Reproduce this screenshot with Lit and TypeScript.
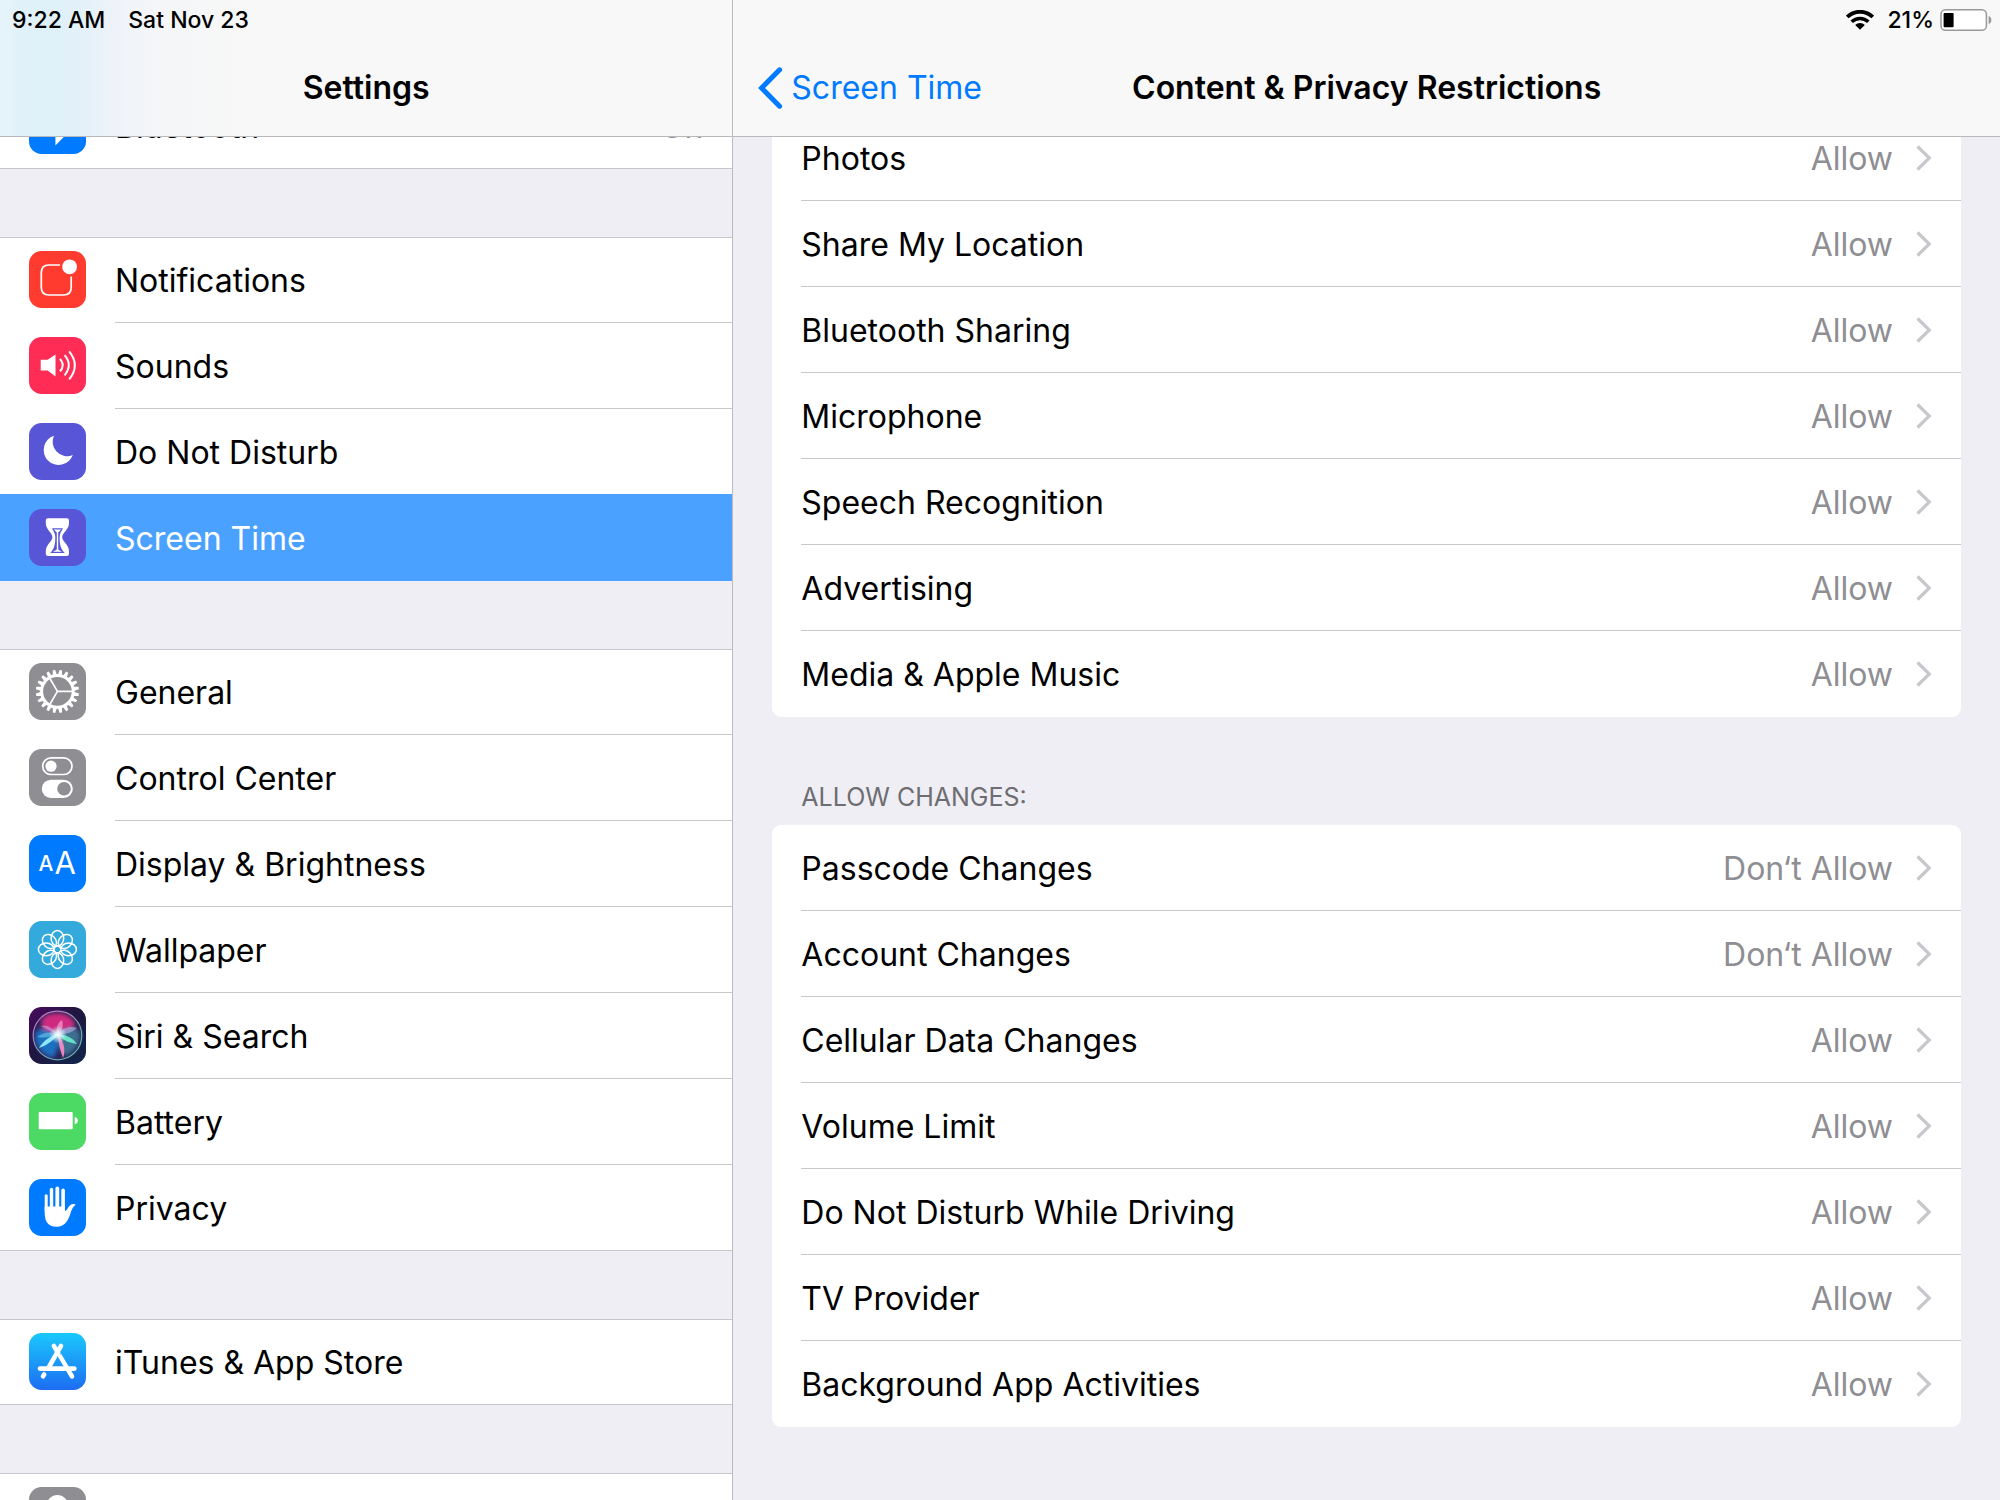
import { LitElement, html, svg, css, nothing, TemplateResult, SVGTemplateResult } from "lit";
import { customElement, property } from "lit/decorators.js";

type IconName =
  | "bluetooth" | "notifications" | "sounds" | "dnd" | "screentime" | "general"
  | "control" | "display" | "wallpaper" | "siri" | "battery" | "privacy"
  | "store" | "passwords";

interface MenuItem {
  label?: string;
  name?: string;
  icon: IconName;
  value?: string;
  selected?: boolean;
}

interface Restriction {
  label: string;
  value: string;
}

const MENU: MenuItem[][] = [
  [{ label: "Bluetooth", icon: "bluetooth", value: "On" }],
  [
    { label: "Notifications", icon: "notifications" },
    { label: "Sounds", icon: "sounds" },
    { label: "Do Not Disturb", icon: "dnd" },
    { label: "Screen Time", icon: "screentime", selected: true },
  ],
  [
    { label: "General", icon: "general" },
    { label: "Control Center", icon: "control" },
    { label: "Display & Brightness", icon: "display" },
    { label: "Wallpaper", icon: "wallpaper" },
    { label: "Siri & Search", icon: "siri" },
    { label: "Battery", icon: "battery" },
    { label: "Privacy", icon: "privacy" },
  ],
  [{ label: "iTunes & App Store", icon: "store" }],
  [{ name: "Passwords", icon: "passwords" }],
];

const PRIVACY: Restriction[] = [
  { label: "Photos", value: "Allow" },
  { label: "Share My Location", value: "Allow" },
  { label: "Bluetooth Sharing", value: "Allow" },
  { label: "Microphone", value: "Allow" },
  { label: "Speech Recognition", value: "Allow" },
  { label: "Advertising", value: "Allow" },
  { label: "Media & Apple Music", value: "Allow" },
];

const CHANGES: Restriction[] = [
  { label: "Passcode Changes", value: "Don‘t Allow" },
  { label: "Account Changes", value: "Don‘t Allow" },
  { label: "Cellular Data Changes", value: "Allow" },
  { label: "Volume Limit", value: "Allow" },
  { label: "Do Not Disturb While Driving", value: "Allow" },
  { label: "TV Provider", value: "Allow" },
  { label: "Background App Activities", value: "Allow" },
];

const steps = (n: number) => Array.from({ length: n }, (_, i) => (i * 360) / n);

const TILE: Record<IconName, string> = {
  bluetooth: "#007aff",
  notifications: "#ff3b30",
  sounds: "#ff2d55",
  dnd: "#5856d6",
  screentime: "#5856d6",
  general: "#8e8e93",
  control: "#8e8e93",
  display: "#007aff",
  wallpaper: "#34aadc",
  siri: "url(#siri-bg)",
  battery: "#4cd964",
  privacy: "#007aff",
  store: "url(#store-bg)",
  passwords: "#8e8e93",
};

const GLYPH: Record<IconName, SVGTemplateResult> = {
  bluetooth: svg`
    <path d="M18.5 19 L37 36 L27.6 45.5 V10 L37 19 L18.5 37" fill="none" stroke="#fff" stroke-width="2.4"/>
    <path d="M27 39 H34 L27 46.4 Z" fill="#fff"/>`,
  notifications: svg`
    <path d="M31 14 H20 Q12.3 14 12.3 21.5 V36.5 Q12.3 44 20 44 H34.5 Q42.2 44 42.2 36.5 V25.5" fill="none" stroke="#fff" stroke-width="1.7"/>
    <circle cx="40.6" cy="15.8" r="7.4" fill="#fff"/>`,
  sounds: svg`
    <path d="M11.7 22.7 H18.7 L26.5 17.6 V39.4 L18.7 33.4 H11.7 Z" fill="#fff"/>
    <g fill="none" stroke="#fff" stroke-width="2">
      <path d="M31 21.8 Q36.5 28 31 34.4"/>
      <path d="M35.6 18.2 Q44 28 35.6 38.4"/>
      <path d="M40.2 14.4 Q51.5 28.5 40.2 42.4"/>
    </g>`,
  dnd: svg`
    <path d="M25 12.7 A15 15 0 1 0 43.8 32 A14.4 14.4 0 0 1 25 12.7 Z" fill="#fff"/>`,
  screentime: svg`
    <path d="M19 9.3 H37.8 Q40 9.3 40 11.5 V14 C40 21 33.2 23.5 33.2 28 C33.2 32.8 40 35.2 40 42.2 V44.7 Q40 47 37.8 47 H19 Q16.8 47 16.8 44.7 V42.2 C16.8 35.2 23.4 32.8 23.4 28 C23.4 23.5 16.8 21 16.8 14 V11.5 Q16.8 9.3 19 9.3 Z" fill="#fff"/>
    <path d="M23 19.2 H34 C32.6 22.2 30.6 24 30.6 28 C30.6 35 31.5 40 35.8 44 H21.2 C25.4 40 26.3 35 26.3 28 C26.3 24 24.4 22.2 23 19.2 Z" fill="#5856d6"/>
    <path d="M24.8 20.4 H32.2 L29.2 23.5 V40.5 C30.5 41.5 32 42.2 33 42.8 H24 C25 42.2 26.5 41.5 27.8 40.5 V23.5 Z" fill="#fff"/>`,
  general: svg`
    <g fill="none" stroke="#fff">
      <circle cx="28.4" cy="28.4" r="15.8" stroke-width="3"/>
      <path d="M28.4 28.4 H43 M28.4 28.4 L21.1 15.8 M28.4 28.4 L21.1 41" stroke-width="1.7"/>
    </g>
    <g fill="#fff">
      ${steps(20).map((a) => svg`<path d="M26.3 12.2 L27.2 6.8 H29.6 L30.5 12.2 Z" transform="rotate(${a + 9} 28.4 28.4)"/>`)}
    </g>`,
  control: svg`
    <rect x="13.7" y="8.9" width="29.3" height="16.6" rx="8.3" fill="none" stroke="#fff" stroke-width="1.7"/>
    <circle cx="22" cy="17.2" r="5.6" fill="#fff"/>
    <rect x="12.8" y="30.7" width="31" height="18.3" rx="9.1" fill="#fff"/>
    <circle cx="35" cy="39.8" r="6.8" fill="#8e8e93"/>`,
  display: svg`
    <text x="9.4" y="36.3" font-family="Inter, sans-serif" font-size="21" font-weight="500" fill="#fff">A</text>
    <text x="25.6" y="39" font-family="Inter, sans-serif" font-size="31" font-weight="400" fill="#fff">A</text>`,
  wallpaper: svg`
    <g fill="none" stroke="#fff" stroke-width="1.5">
      ${steps(8).map((a) => svg`<ellipse cx="28.4" cy="17.2" rx="6.3" ry="7.8" transform="rotate(${a} 28.4 28.4)"/>`)}
      <circle cx="28.4" cy="28.4" r="3.4"/>
    </g>`,
  siri: svg`
    <circle cx="28.5" cy="28.5" r="24" fill="#2c2458"/>
    <g filter="url(#siri-soft)">
      <path d="M28 28 C14 26 9 16 15 10 C26 3 42 6 46 17 C42 24 36 26 28 28 Z" fill="#cf2b80"/>
      <path d="M28 28 C18 20 8 20 6 28 C6 38 12 48 24 51 C29 44 31 36 28 28 Z" fill="#1a6fc0"/>
      <path d="M28 28 C36 20 46 18 51 26 C52 36 46 45 36 49 C32 44 28 36 28 28 Z" fill="#3a6f90"/>
    </g>
    <path d="M28 27 C23 20 17 17 12 19 C17 22 22 24 28 27 Z" fill="#d8a0e8" opacity=".55"/>
    <path d="M28 27 C21 24 13 26 8 30 C15 31 22 31 28 27 Z" fill="#7fd6f0" opacity=".5"/>
    <path d="M30 26 C26 33 18 38 10 41 C14 34 21 29 30 26 Z" fill="#9df4ff" opacity=".9"/>
    <path d="M29 27 C38 28 44 31 48 37 C40 36 33 33 29 27 Z" fill="#6ff5cc" opacity=".85"/>
    <path d="M29 27 C35 35 37 43 34 51 C31 43 29 35 29 27 Z" fill="#ff8cc8" opacity=".9"/>
    <path d="M28 27 C27 20 29 15 33 13 C35 19 33 24 28 27 Z" fill="#ffd0ea" opacity=".5"/>
    <path d="M28 27 C35 20 42 19 48 21 C43 26 35 28 28 27 Z" fill="#b9c6ff" opacity=".5"/>
    <circle cx="29" cy="27.5" r="9" fill="url(#siri-core)"/>
    <circle cx="28.5" cy="28.5" r="24.3" fill="none" stroke="url(#siri-ring)" stroke-width="1.2"/>`,
  battery: svg`
    <rect x="9.7" y="19" width="34" height="17.2" rx="1" fill="#fff"/>
    <path d="M45.7 24 Q48.8 24.6 48.8 27.6 Q48.8 30.6 45.7 31.2 Z" fill="#fff"/>`,
  privacy: svg`
    <g stroke="#fff" stroke-linecap="round" fill="none">
      <path d="M17.2 16.8 V32" stroke-width="3"/>
      <path d="M22.5 10.4 V32" stroke-width="3.4"/>
      <path d="M28.3 9.4 V32" stroke-width="3.8"/>
      <path d="M34.1 11.4 V32" stroke-width="3.6"/>
    </g>
    <path d="M15.7 27.5 H35.9 V32.2 Q37.6 31.6 39 29 Q41 25.2 44.6 25 Q46.8 25 46.4 26 Q43.6 27.6 42.4 31.6 C41 36 39.8 40 37.4 43 Q33.8 47.7 27.8 47.7 Q21 47.7 17.8 43.2 Q15.7 40 15.7 34 Z" fill="#fff"/>`,
  store: svg`
    <g stroke="#fff" stroke-width="4.6" stroke-linecap="round" fill="none">
      <path d="M32 12.9 L19.4 35"/>
      <path d="M15.2 41.4 L14 43.4"/>
      <path d="M24.8 12.9 L43 43.4"/>
      <path d="M11 35.6 H45.4"/>
    </g>
    <path d="M28.1 23.4 L34.2 33.4 M31.4 21.6 L32.4 19.8" stroke="#1c95f8" stroke-width=".8"/>`,
  passwords: svg`
    <circle cx="28.4" cy="18.5" r="10.6" fill="#fff"/>
    <path d="M24 27 H33 V46 L28.5 50 L24 46 Z" fill="#fff"/>
    <circle cx="28.4" cy="17" r="3" fill="#8e8e93"/>`,
};

@customElement("setting-icon")
export class SettingIcon extends LitElement {
  @property() name: IconName = "general";

  static styles = css`
    :host { display: block; width: 57px; height: 57px; }
    .tile { display: block; width: 100%; height: 100%; }
  `;

  private defs(): SVGTemplateResult {
    if (this.name === "store") {
      return svg`<defs><linearGradient id="store-bg" x1="0" y1="0" x2="0" y2="1">
        <stop offset="0" stop-color="#1ac8fd"/><stop offset="1" stop-color="#1d6df2"/>
      </linearGradient></defs>`;
    }
    if (this.name === "siri") {
      return svg`<defs>
        <filter id="siri-soft" x="-20%" y="-20%" width="140%" height="140%"><feGaussianBlur stdDeviation="2.2"/></filter>
        <linearGradient id="siri-bg" x1="0" y1="0" x2="1" y2="1">
          <stop offset="0" stop-color="#4a0a60"/><stop offset=".45" stop-color="#1f1640"/><stop offset="1" stop-color="#10264a"/>
        </linearGradient>
        <radialGradient id="siri-core"><stop offset="0" stop-color="#fff"/><stop offset=".35" stop-color="#e8fbff" stop-opacity=".8"/><stop offset="1" stop-color="#bfefff" stop-opacity="0"/></radialGradient>
        <linearGradient id="siri-ring" x1="0" y1="0" x2="1" y2="1">
          <stop offset="0" stop-color="#c06ad0"/><stop offset=".5" stop-color="#8a9ab0"/><stop offset="1" stop-color="#4fc7b0"/>
        </linearGradient>
      </defs>`;
    }
    return svg``;
  }

  render(): TemplateResult {
    return html`<svg class="tile" viewBox="0 0 57 57" aria-hidden="true">
      ${this.defs()}
      <rect width="57" height="57" rx="12.5" fill=${TILE[this.name]}></rect>
      ${GLYPH[this.name]}
    </svg>`;
  }
}

@customElement("app-root")
export class AppRoot extends LitElement {
  static styles = css`
    :host {
      display: block;
      font-family: Inter, "Liberation Sans", sans-serif;
      font-size: 32px;
      line-height: 40px;
      color: #000;
    }
    * { box-sizing: border-box; }
    .screen {
      display: grid;
      grid-template-columns: minmax(0, 11fr) minmax(0, 19fr);
      height: 100vh;
      overflow: hidden;
      background: #efeef4;
    }
    .pane { display: flex; flex-direction: column; min-width: 0; min-height: 0; overflow: hidden; }
    .side { border-right: 1px solid #bcbbc1; }
    .bar {
      position: relative;
      z-index: 1;
      flex: none;
      height: 137px;
      border-bottom: 1px solid #b9b9bc;
      background: #f8f8f8;
    }
    .side .bar { background: linear-gradient(90deg, #e6f3fa 0, #def0f9 48px, #e4f1f9 84px, #eff3f9 116px, #f5f6f8 160px, #f8f8f8 260px); }
    .status {
      display: flex;
      align-items: center;
      height: 40px;
      padding: 0 12px;
      font-size: 23px;
      line-height: 40px;
      font-weight: 500;
      gap: 23px;
    }
    .status.end { justify-content: flex-end; padding: 0 8px; gap: 6px; }
    .wifi { width: 28px; height: 20px; margin-right: 7px; }
    .cell { width: 52px; height: 24px; }
    .nav { display: grid; grid-template-columns: 1fr auto 1fr; align-items: center; height: 96px; padding: 0 25px; }
    .title { grid-column: 2; margin: 0; font-size: 32px; font-weight: 600; line-height: 96px; }
    .back { display: flex; align-items: center; gap: 8px; color: #007aff; text-decoration: none; }
    .back svg { width: 25px; height: 42px; }
    .list { flex: 1 0 auto; }
    .side .list { display: flex; flex-direction: column; gap: 68px; margin-top: -54px; }
    .detail .list { margin: -22px 39px 0; }
    .group { margin: 0; padding: 0; list-style: none; background: #fff; }
    .side .group { box-shadow: inset 0 1px #c8c7cc; }
    .card { border-radius: 9px; overflow: hidden; }
    .row {
      display: flex;
      align-items: stretch;
      width: 100%;
      height: 86px;
      padding: 0;
      border: 0;
      background: none;
      color: inherit;
      font: inherit;
      text-align: left;
    }
    .card .row { padding-left: 29px; }
    .icon { margin: 14px 29px 0; }
    .body {
      display: flex;
      flex: 1;
      align-items: center;
      min-width: 0;
      padding: 2px 29px 0 0;
      border-bottom: 1px solid #c8c7cc;
    }
    .card li:last-child .body { border-bottom-color: transparent; }
    .side li:last-child .row { box-shadow: inset 0 -1px #c8c7cc; }
    .side .row.selected, .side li:last-child .row.selected {
      position: relative;
      background: #4ba1ff;
      box-shadow: 0 -1px #4ba1ff;
      color: #fff;
    }
    .side .selected .body { border-color: transparent; }
    .label { flex: 1; white-space: nowrap; }
    .value { color: #8e8e93; white-space: nowrap; }
    .chevron { width: 16px; height: 26px; margin: 0 0 2px 23px; }
    .heading { margin: 0; padding: 60px 29px 8px; font-size: 25px; line-height: 40px; font-weight: 400; color: #6d6d72; }
  `;

  private menuRow(item: MenuItem): TemplateResult {
    return html`<li>
      <button class="row ${item.selected ? "selected" : ""}" type="button" aria-label=${item.name ?? nothing}>
        <setting-icon class="icon" name=${item.icon}></setting-icon>
        <span class="body">
          ${item.label ? html`<span class="label">${item.label}</span>` : nothing}
          ${item.value ? html`<span class="value">${item.value}</span>` : nothing}
        </span>
      </button>
    </li>`;
  }

  private restrictionRow(item: Restriction): TemplateResult {
    return html`<li>
      <button class="row" type="button">
        <span class="body">
          <span class="label">${item.label}</span>
          <span class="value">${item.value}</span>
          <svg class="chevron" viewBox="0 0 16 26" aria-hidden="true">
            <path d="M1.5 1.5 L13.3 13 L1.5 24.5" fill="none" stroke="#c7c7cc" stroke-width="3.2"></path>
          </svg>
        </span>
      </button>
    </li>`;
  }

  render(): TemplateResult {
    return html`
      <div class="screen">
        <nav class="pane side" aria-label="Settings">
          <header class="bar">
            <div class="status"><span>9:22 AM</span><span>Sat Nov 23</span></div>
            <div class="nav"><h1 class="title">Settings</h1></div>
          </header>
          <div class="list">
            ${MENU.map((group) => html`<ul class="group">${group.map((item) => this.menuRow(item))}</ul>`)}
          </div>
        </nav>
        <main class="pane detail">
          <header class="bar">
            <div class="status end">
              <svg class="wifi" viewBox="0 0 28 20" aria-hidden="true">
                <g fill="none" stroke="#000">
                  <path d="M1.2 7 A18.2 18.2 0 0 1 26.8 7" stroke-width="3.8"></path>
                  <path d="M5.7 11.8 A11.9 11.9 0 0 1 22.3 11.8" stroke-width="3.6"></path>
                </g>
                <path d="M9.2 15.1 A6.6 6.6 0 0 1 18.8 15.1 L14 19.7 Z" fill="#000"></path>
              </svg>
              <span>21%</span>
              <svg class="cell" viewBox="0 0 52 24" aria-hidden="true">
                <rect x="1" y="1.7" width="45.4" height="20.6" rx="4.6" fill="#fff" stroke="#999" stroke-width="1.5"></rect>
                <rect x="3.6" y="5" width="10" height="14.2" rx="1" fill="#000"></rect>
                <path d="M48.6 8 Q51.4 9 51.4 12 Q51.4 15 48.6 16 Z" fill="#999"></path>
              </svg>
            </div>
            <div class="nav">
              <a class="back" href="#screen-time">
                <svg viewBox="0 0 25 42" aria-hidden="true">
                  <path d="M21.6 2.8 L3.6 21 L21.6 39.2" fill="none" stroke="#007aff" stroke-width="5" stroke-linecap="round" stroke-linejoin="miter"></path>
                </svg>
                <span>Screen Time</span>
              </a>
              <h2 class="title">Content &amp; Privacy Restrictions</h2>
            </div>
          </header>
          <div class="list">
            <ul class="group card">${PRIVACY.map((item) => this.restrictionRow(item))}</ul>
            <h3 class="heading">ALLOW CHANGES:</h3>
            <ul class="group card">${CHANGES.map((item) => this.restrictionRow(item))}</ul>
          </div>
        </main>
      </div>
    `;
  }
}
